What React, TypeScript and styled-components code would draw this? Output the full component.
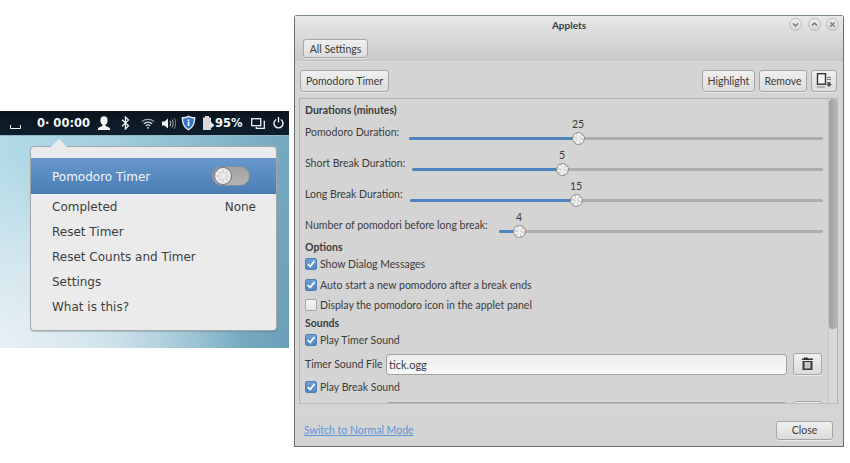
import React from "react";
import styled, { createGlobalStyle } from "styled-components";

const Global = createGlobalStyle`
  html, body { margin: 0; padding: 0; background: #fff; overflow: hidden; }
  * { box-sizing: border-box; }
`;

const Page = styled.div`
  display: flex;
  align-items: flex-start;
  width: 850px;
  height: 463px;
`;

const Scene = styled.div`
  width: 289px;
  height: 237px;
  margin-top: 111px;
  flex: none;
  display: flex;
  flex-direction: column;
  background:
    radial-gradient(ellipse 240px 190px at 0% 100%, #e8f0f5 0%, rgba(225,236,242,.75) 45%, rgba(200,225,235,0) 100%),
    linear-gradient(100deg, #b4dce8 0%, #a2cedd 35%, #7fb2c6 75%, #6a9fb9 100%);
`;

const Panel = styled.div`
  height: 25px;
  flex: none;
  display: flex;
  align-items: center;
  background: linear-gradient(#0a141e, #0f1e2c);
  color: #f4f6f8;
  font: bold 11.5px "DejaVu Sans", sans-serif;
  border-bottom: 1px solid #8fb7c6;
`;

const TrayItem = styled.div<{ $left: number }>`
  margin-left: ${(p) => p.$left}px;
  display: flex;
  align-items: center;
  flex: none;
  white-space: pre;
`;

const Popup = styled.div`
  position: relative;
  margin: 10px 0 0 30px;
  width: 247px;
  height: 185px;
  background: #ebebeb;
  border: 1px solid #a4a8aa;
  border-radius: 4px;
  padding-top: 11px;
  font: 12px "DejaVu Sans", sans-serif;
  color: #3e3e3e;
  box-shadow: 0 1px 1px rgba(60, 80, 90, 0.25);
`;

const Arrow = styled.div`
  position: absolute;
  left: 20px;
  top: -8px;
  width: 16px;
  height: 8px;
  background: #ebebeb;
  clip-path: polygon(50% 0, 100% 100%, 0 100%);
`;

const ActiveRow = styled.div`
  height: 36px;
  display: flex;
  align-items: center;
  justify-content: space-between;
  padding: 0 26px 0 21px;
  color: #f2f6fb;
  background: linear-gradient(#6898cd, #4a7cb3);
`;

const ActiveLabel = styled.span`
  margin-top: 2px;
`;

const Toggle = styled.div`
  width: 38px;
  height: 20px;
  border-radius: 10px;
  background: linear-gradient(#a2a2a2, #b4b4b4);
  border: 1px solid #7f8ea0;
  display: flex;
  align-items: center;
  padding-left: 1px;
`;

const MenuRow = styled.div`
  height: 25px;
  display: flex;
  align-items: center;
  justify-content: space-between;
  padding: 0 20px 0 21px;
`;

const Win = styled.div`
  width: 550px;
  height: 432px;
  margin: 15px 0 0 5px;
  flex: none;
  display: flex;
  flex-direction: column;
  border: 1px solid #6c6c6c;
  border-top-color: #7a8a90;
  border-radius: 3px 3px 0 0;
  background: #d4d4d4;
  font: 10.5px Lato, sans-serif;
  color: #3c3c3c;
`;

const Head = styled.div`
  height: 45px;
  flex: none;
  background: linear-gradient(#e8e8e8, #c9c9c9);
  border-bottom: 1px solid #c2c2c2;
  box-shadow: 0 1px 0 #dcdcdc;
  padding: 0 8px;
`;

const TitleRow = styled.div`
  position: relative;
  height: 22px;
  padding-bottom: 4px;
  display: flex;
  align-items: center;
  justify-content: center;
  font-weight: 700;
  font-size: 10px;
  color: #3a3a3a;
`;

const WinControls = styled.div`
  position: absolute;
  right: -4px;
  top: 2px;
  display: flex;
  gap: 5.500px;
`;

const WinControl = styled.div`
  width: 13px;
  height: 13px;
  border-radius: 50%;
  border: 1px solid #bcbcbc;
  background: linear-gradient(#f0f0f0, #d2d2d2);
  display: flex;
  align-items: center;
  justify-content: center;
`;

const Btn = styled.div<{ $w?: number; $h?: number }>`
  display: inline-flex;
  align-items: center;
  justify-content: center;
  width: ${(p) => (p.$w ? `${p.$w}px` : "auto")};
  height: ${(p) => p.$h ?? 22}px;
  flex: none;
  border: 1px solid #a6a6a6;
  border-radius: 3px;
  background: linear-gradient(#f0f0f0, #dcdcdc);
  box-shadow: 0 1px 0 rgba(255, 255, 255, 0.5);
  color: #3c3c3c;
  white-space: nowrap;
`;

const AllSettings = styled(Btn)`
  margin-top: 1px;
`;

const ActionBar = styled.div`
  height: 22px;
  margin: 9px 6px 0 5px;
  flex: none;
  display: flex;
  gap: 4px;
`;

const Spacer = styled.div`
  flex: 1;
`;

const Frame = styled.div`
  position: relative;
  height: 306px;
  margin: 6px 5px 0 4px;
  flex: none;
  border: 1px solid #b2b2b2;
  border-bottom-color: #bcbcbc;
  overflow: hidden;
  padding: 3px 0 0 5px;
`;

const ScrollTrack = styled.div`
  position: absolute;
  top: 0;
  right: 0;
  bottom: 0;
  width: 9px;
  background: #d9d9d9;
  border-left: 1px solid #c6c6c6;
`;

const ScrollThumb = styled.div`
  height: 230px;
  border-radius: 4px;
  background: linear-gradient(90deg, #9f9f9f, #b5b5b5);
`;

const Section = styled.div<{ $top?: number }>`
  height: 14px;
  line-height: 14px;
  font-weight: 700;
  margin-top: ${(p) => p.$top ?? 0}px;
`;

const SliderRow = styled.div<{ $labelW: number }>`
  display: grid;
  grid-template-columns: ${(p) => p.$labelW}px 1fr;
  height: 31px;
  margin-right: 14px;
`;

const SliderLabel = styled.div`
  padding-top: 8px;
  line-height: 14px;
  white-space: nowrap;
`;

const SliderBox = styled.div`
  position: relative;
`;

const Track = styled.div`
  position: absolute;
  left: 0;
  right: 0;
  top: 20px;
  height: 3px;
  border-radius: 2px;
  background: #aeaeae;
`;

const Fill = styled.div`
  height: 3px;
  border-radius: 2px;
  background: #4d84bd;
`;

const Thumb = styled.div`
  position: absolute;
  top: 15px;
  width: 13px;
  height: 13px;
  margin-left: -7px;
  border-radius: 50%;
  border: 1px solid #8e8e8e;
  background: repeating-conic-gradient(#f4f4f4 0 30deg, #d6d6d6 30deg 60deg);
`;

const ValueText = styled.div`
  position: absolute;
  top: 0;
  width: 30px;
  margin-left: -16px;
  text-align: center;
  line-height: 14px;
`;

const CheckRow = styled.div<{ $top?: number }>`
  height: 20px;
  margin-top: ${(p) => p.$top ?? 0}px;
  display: flex;
  align-items: center;
  gap: 3px;
`;

const Box = styled.div<{ $on: boolean }>`
  width: 12px;
  height: 12px;
  border-radius: 2px;
  flex: none;
  display: flex;
  align-items: center;
  justify-content: center;
  border: 1px solid ${(p) => (p.$on ? "#4f80b5" : "#a8a8a8")};
  background: ${(p) => (p.$on ? "linear-gradient(#6f9fd4, #5288c2)" : "linear-gradient(#f6f6f6, #e6e6e6)")};
`;

const FileRow = styled.div<{ $top: number }>`
  display: flex;
  align-items: center;
  height: 22px;
  margin: ${(p) => p.$top}px 15px 0 0;
`;

const FileLabel = styled.div`
  width: 81px;
  flex: none;
  white-space: nowrap;
`;

const FileInput = styled.div`
  flex: 1;
  height: 21px;
  padding: 0 2px;
  display: flex;
  align-items: center;
  border: 1px solid #a2a2a2;
  border-radius: 3px;
  background: linear-gradient(#ececec, #f8f8f8);
  font-size: 11px;
  margin-right: 6px;
`;

const Footer = styled.div`
  flex: 1;
  margin-top: 7px;
  border-top: 1px solid #dadada;
  display: flex;
  align-items: center;
  justify-content: space-between;
  padding: 0 10px 0 9px;
`;

const Link = styled.a`
  color: #5a96d8;
  text-decoration: underline;
  margin-top: 2px;
`;

const CloseBtn = styled(Btn)`
  margin-top: 2px;
`;

const Svg = styled.svg`
  display: block;
  flex: none;
`;

const WorkspaceIcon = () => (
  <Svg width="11" height="12" viewBox="0 0 11 12" fill="none" stroke="#f2f4f6" strokeWidth="1">
    <path d="M.5 8v3.500h10V8" />
  </Svg>
);
const UserIcon = () => (
  <Svg width="14" height="15" viewBox="0 0 14 15" fill="#f6f6f6">
    <ellipse cx="7" cy="4.600" rx="3.600" ry="4.400" />
    <path d="M5.600 8h2.800v1.800c1.200.9 4.600 1.400 4.600 3.200v1H1v-1c0-1.800 3.400-2.300 4.600-3.200z" />
  </Svg>
);
const BluetoothIcon = () => (
  <Svg width="9" height="14" viewBox="0 0 9 14" fill="none" stroke="#eceff1" strokeWidth="1.300">
    <path d="M1 3.800l6.500 6L4.400 13V1l3.100 3.100L1 10.200" />
  </Svg>
);
const WifiIcon = () => (
  <Svg width="14" height="11" viewBox="0 0 14 11" fill="none" stroke="#dfe3e6" strokeWidth="1.200">
    <path d="M.8 3.600C4.300.6 9.700.6 13.200 3.600" opacity=".7" />
    <path d="M2.800 5.700c2.500-2 5.900-2 8.400 0" />
    <path d="M4.800 7.800c1.300-1 3.100-1 4.400 0" />
    <circle cx="7" cy="9.800" r=".9" fill="#dfe3e6" stroke="none" />
  </Svg>
);
const VolumeIcon = () => (
  <Svg width="14" height="13" viewBox="0 0 14 13" fill="none" stroke="#cfd4d8" strokeWidth="1">
    <path d="M0 4.500h2.500L6 1.500v10l-3.500-3H0z" fill="#f2f4f6" stroke="none" />
    <path d="M8 3.800c1 1.500 1 4 0 5.400" />
    <path d="M10 2.500c1.600 2.200 1.600 5.800 0 8" opacity=".8" />
    <path d="M12 1c2.200 3.100 2.200 7.900 0 11" opacity=".6" />
  </Svg>
);
const ShieldIcon = () => (
  <Svg width="15" height="16" viewBox="0 0 15 16">
    <path d="M7.500.5c2 1.200 4 1.600 6.800 1.600.2 5.600-1.400 10.600-6.800 13.400C2.100 12.700.5 7.700.7 2.100 3.500 2.100 5.500 1.700 7.500.5z" fill="#dfe6ea" />
    <path d="M7.500 2.200c1.700.9 3.400 1.300 5.300 1.300 0 4.500-1.300 8.200-5.300 10.400-4-2.200-5.300-5.900-5.300-10.400 1.900 0 3.600-.4 5.300-1.300z" fill="#2f74c0" />
    <rect x="6.700" y="6.500" width="1.700" height="4.500" fill="#f2f6fa" />
    <rect x="6.700" y="4.400" width="1.700" height="1.500" fill="#f2f6fa" />
  </Svg>
);
const BatteryIcon = () => (
  <Svg width="13" height="15" viewBox="0 0 13 15">
    <path d="M3 0h4v1.500h2V14H1V1.500h2z" fill="#d8d8d8" />
    <path d="M9 6l3.500 3.500L9 12l-.5-2-1.500 1 1.500-2.500z" fill="#eef0f2" />
  </Svg>
);
const WindowsIcon = () => (
  <Svg width="14" height="11" viewBox="0 0 14 11" fill="none" stroke="#f2f4f6" strokeWidth="1.300">
    <rect x=".7" y=".7" width="9" height="7" />
    <path d="M12.500 3.500h.8v7h-8V9" />
  </Svg>
);
const PowerIcon = () => (
  <Svg width="11" height="12" viewBox="0 0 11 12" fill="none" stroke="#f4f6f8" strokeWidth="1.400">
    <path d="M3.200 2.500a4.500 4.500 0 1 0 4.600 0" />
    <path d="M5.500 0v5.500" />
  </Svg>
);

const SwitchThumb = () => (
  <Svg width="18" height="18" viewBox="0 0 18 18">
    <circle cx="9" cy="9" r="8.500" fill="#ededed" stroke="#6f6f6f" />
    {[0, 45, 90, 135, 180, 225, 270, 315].map((a) => (
      <path key={a} d="M9 7.500L7.800 3h2.400z" fill="#cfcfcf" transform={`rotate(${a} 9 9)`} />
    ))}
  </Svg>
);

const Chevron = ({ d }: { d: string }) => (
  <Svg width="7" height="7" viewBox="0 0 7 7" fill="none" stroke="#666" strokeWidth="1.100">
    <path d={d} />
  </Svg>
);

const ConfigIcon = () => (
  <Svg width="16" height="16" viewBox="0 0 16 16" fill="none">
    <rect x="1.500" y=".7" width="8" height="10.500" stroke="#333" strokeWidth="1.400" fill="#f5f5f5" />
    <path d="M1 14h8" stroke="#888" />
    <path d="M11 4.500h4M11 6.500h4" stroke="#777" />
    <path d="M11.500 9h3v2H16l-3 3-3-3h1.500z" fill="#555" />
  </Svg>
);

const FolderIcon = () => (
  <Svg width="13" height="14" viewBox="0 0 13 14">
    <path d="M3 .5h3.500l1 1H12v1.500H1V1.500h2z" fill="#333" />
    <path d="M1.500 4h10v9h-10z" fill="#3a3a3a" />
    <rect x="3.500" y="5" width="6" height="6.500" fill="#c8c8c8" />
  </Svg>
);

const CheckMark = () => (
  <Svg width="10" height="10" viewBox="0 0 10 10" fill="none" stroke="#fff" strokeWidth="1.800">
    <path d="M1.800 5l2.400 2.500L8.500 2" />
  </Svg>
);

const sliders = [
  { label: "Pomodoro Duration:", labelW: 104, value: "25", pos: 170 },
  { label: "Short Break Duration:", labelW: 107, value: "5", pos: 151 },
  { label: "Long Break Duration:", labelW: 105, value: "15", pos: 167 },
  { label: "Number of pomodori before long break:", labelW: 194, value: "4", pos: 21 },
];

const Check = ({ on, text, top }: { on: boolean; text: string; top?: number }) => (
  <CheckRow $top={top}>
    <Box $on={on}>{on && <CheckMark />}</Box>
    {text}
  </CheckRow>
);

export default function App() {
  return (
    <Page>
      <Global />
      <Scene>
        <Panel>
          <TrayItem $left={10}><WorkspaceIcon /></TrayItem>
          <TrayItem $left={16}>0· 00:00</TrayItem>
          <TrayItem $left={7}><UserIcon /></TrayItem>
          <TrayItem $left={10}><BluetoothIcon /></TrayItem>
          <TrayItem $left={11}><WifiIcon /></TrayItem>
          <TrayItem $left={7}><VolumeIcon /></TrayItem>
          <TrayItem $left={5}><ShieldIcon /></TrayItem>
          <TrayItem $left={6}><BatteryIcon /></TrayItem>
          <TrayItem $left={0}>95%</TrayItem>
          <TrayItem $left={8}><WindowsIcon /></TrayItem>
          <TrayItem $left={8}><PowerIcon /></TrayItem>
        </Panel>
        <Popup>
          <Arrow />
          <ActiveRow>
            <ActiveLabel>Pomodoro Timer</ActiveLabel>
            <Toggle><SwitchThumb /></Toggle>
          </ActiveRow>
          <MenuRow>
            <span>Completed</span>
            <span>None</span>
          </MenuRow>
          <MenuRow>Reset Timer</MenuRow>
          <MenuRow>Reset Counts and Timer</MenuRow>
          <MenuRow>Settings</MenuRow>
          <MenuRow>What is this?</MenuRow>
        </Popup>
      </Scene>

      <Win>
        <Head>
          <TitleRow>
            Applets
            <WinControls>
              <WinControl><Chevron d="M1 2.500l2.500 2.500L6 2.500" /></WinControl>
              <WinControl><Chevron d="M1 4.500L3.500 2 6 4.500" /></WinControl>
              <WinControl><Chevron d="M1.300 1.300l4.400 4.400M5.700 1.300L1.300 5.700" /></WinControl>
            </WinControls>
          </TitleRow>
          <AllSettings $w={65} $h={19}>All Settings</AllSettings>
        </Head>

        <ActionBar>
          <Btn $w={89}>Pomodoro Timer</Btn>
          <Spacer />
          <Btn $w={53}>Highlight</Btn>
          <Btn $w={48}>Remove</Btn>
          <Btn $w={26}>
            <ConfigIcon />
          </Btn>
        </ActionBar>

        <Frame>
          <ScrollTrack>
            <ScrollThumb />
          </ScrollTrack>
          <Section $top={1}>Durations (minutes)</Section>
          {sliders.map((s) => (
            <SliderRow key={s.label} $labelW={s.labelW}>
              <SliderLabel>{s.label}</SliderLabel>
              <SliderBox>
                <Track>
                  <Fill style={{ width: s.pos }} />
                </Track>
                <Thumb style={{ left: s.pos }} />
                <ValueText style={{ left: s.pos }}>{s.value}</ValueText>
              </SliderBox>
            </SliderRow>
          ))}
          <Section $top={-1}>Options</Section>
          <Check on text="Show Dialog Messages" />
          <Check on text="Auto start a new pomodoro after a break ends" top={1} />
          <Check on={false} text="Display the pomodoro icon in the applet panel" />
          <Section $top={1}>Sounds</Section>
          <Check on text="Play Timer Sound" />
          <FileRow $top={3}>
            <FileLabel>Timer Sound File</FileLabel>
            <FileInput>tick.ogg</FileInput>
            <Btn $w={29}><FolderIcon /></Btn>
          </FileRow>
          <Check on text="Play Break Sound" top={2} />
          <FileRow $top={4}>
            <FileLabel />
            <FileInput />
            <Btn $w={29} />
          </FileRow>
        </Frame>

        <Footer>
          <Link href="#">Switch to Normal Mode</Link>
          <CloseBtn $w={57} $h={19}>Close</CloseBtn>
        </Footer>
      </Win>
    </Page>
  );
}
